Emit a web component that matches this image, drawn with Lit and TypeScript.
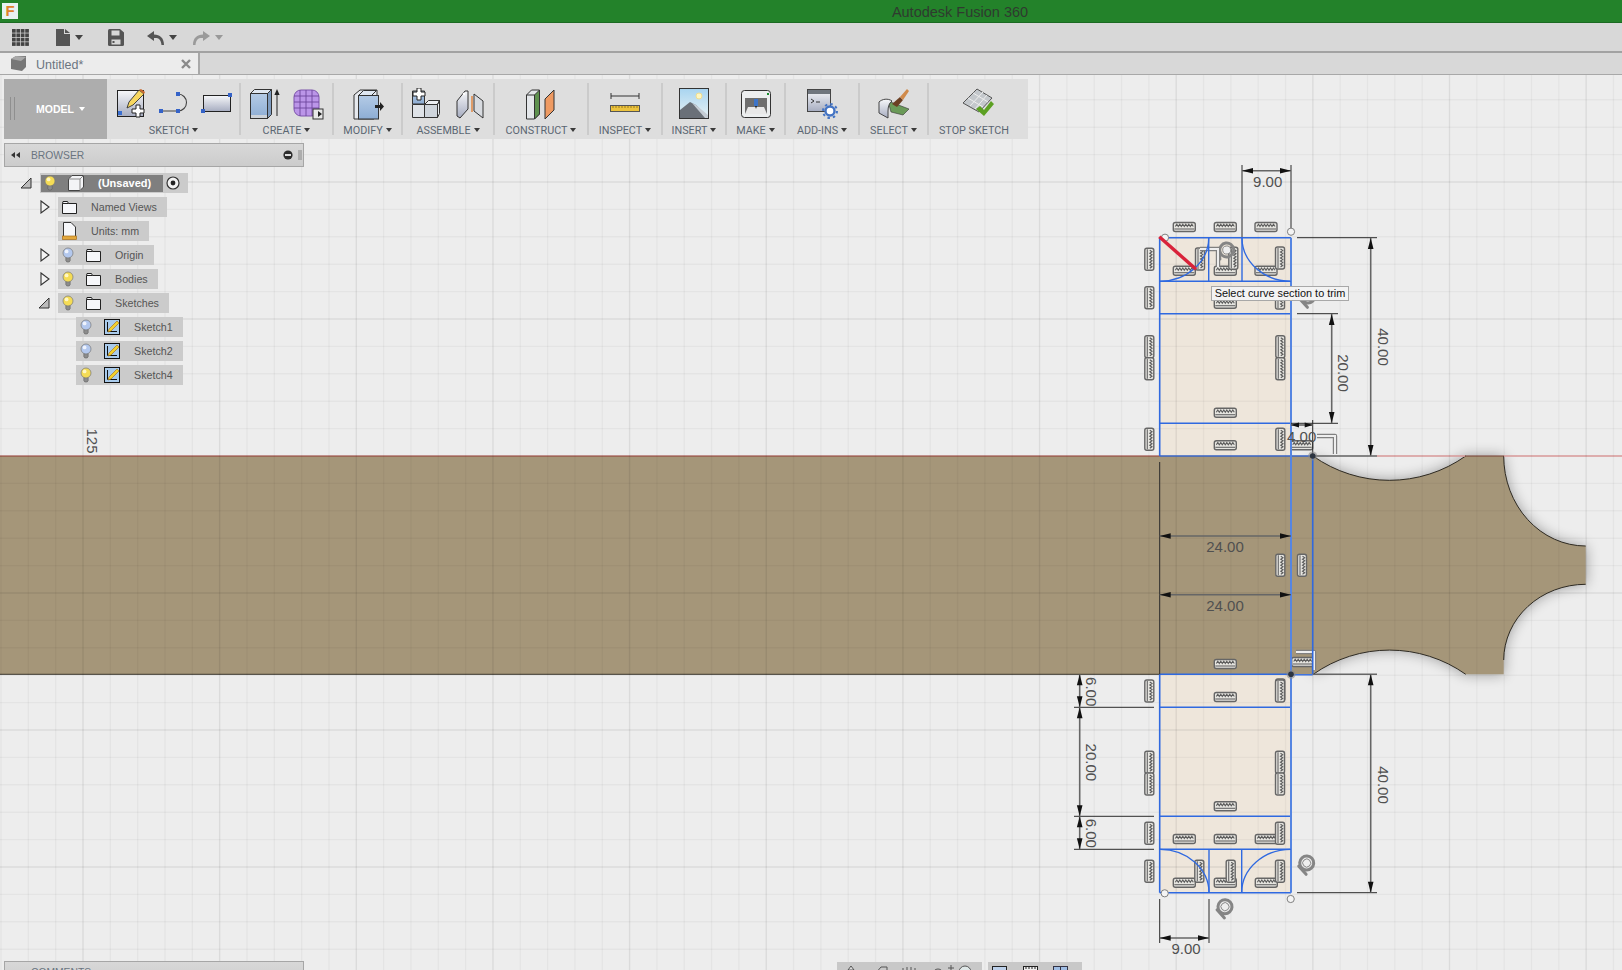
import { LitElement, html, css, svg } from "lit";
import { customElement } from "lit/decorators.js";

const L = 1159.7, R = 1291, R2 = 1312.7, BT = 456, BB = 674.3;

const hIcons: number[][] = [
  [1184.3, 227], [1225.3, 227], [1266, 227], [1184.3, 270.7], [1225.3, 270.7], [1266, 270.7], [1225.3, 303.7],
  [1225.3, 412.7], [1225.3, 445.3], [1301.7, 445.3], [1302.7, 662], [1225.3, 664], [1225.3, 697], [1225.3, 806.3],
  [1184.3, 839], [1225.3, 839], [1266.3, 839], [1184.3, 882.7], [1225.3, 882.7], [1266.3, 882.7],
];
const vIcons: number[][] = [
  [1149.3, 259.3], [1149.3, 297.7], [1280, 258], [1200, 259], [1233.3, 258.3], [1280, 298], [1149.3, 346.7], [1149.3, 368.7],
  [1280.3, 346.7], [1280.3, 368.7], [1149.3, 439.3], [1280.3, 439.3], [1280.3, 565.3], [1302, 565.3], [1280.3, 690],
  [1149.3, 691], [1280, 691], [1149.3, 762.3], [1149.3, 784], [1280, 762.3], [1280, 784], [1149.3, 833.3], [1280, 833.3],
  [1149.3, 871.3], [1280, 871.3], [1199.3, 871.3], [1230.7, 871.3],
];

const arrowR = (x: number, y: number) => svg`<path d="M${x} ${y} l-11 -2.8 v5.6z" fill="#111"/>`;
const arrowL = (x: number, y: number) => svg`<path d="M${x} ${y} l11 -2.8 v5.6z" fill="#111"/>`;
const arrowU = (x: number, y: number) => svg`<path d="M${x} ${y} l-2.8 11 h5.6z" fill="#111"/>`;
const arrowD = (x: number, y: number) => svg`<path d="M${x} ${y} l-2.8 -11 h5.6z" fill="#111"/>`;
const ext = (x1: number, y1: number, x2: number, y2: number) =>
  svg`<line x1=${x1} y1=${y1} x2=${x2} y2=${y2} stroke="#2a2a2a" stroke-width="1"/>`;
const dimLine = (x1: number, y1: number, x2: number, y2: number) =>
  svg`<line x1=${x1} y1=${y1} x2=${x2} y2=${y2} stroke="#666" stroke-width="1.6"/>`;
const vLabel = (x: number, y: number, t: string) =>
  svg`<text class="dim" text-anchor="middle" transform="translate(${x} ${y}) rotate(90)" dy="5">${t}</text>`;
const hLabel = (x: number, y: number, t: string) =>
  svg`<text class="dim" text-anchor="middle" x=${x} y=${y}>${t}</text>`;
const vDim = (x: number, y1: number, y2: number) =>
  svg`${dimLine(x, y1, x, y2)}${arrowU(x, y1)}${arrowD(x, y2)}`;
const hDim = (y: number, x1: number, x2: number) =>
  svg`${dimLine(x1, y, x2, y)}${arrowL(x1, y)}${arrowR(x2, y)}`;
const openPt = (x: number, y: number) =>
  svg`<circle cx=${x} cy=${y} r="3.6" fill="#f4f4f4" stroke="#808080" stroke-width="1"/>`;
const darkPt = (x: number, y: number) =>
  svg`<circle cx=${x} cy=${y} r="4.6" fill="#8a8a8a" opacity=".6"/><circle cx=${x} cy=${y} r="2.8" fill="#2c3440"/>`;

const bulb = (c: string, hi: string) => html`<svg class="ic" width="12" height="16" viewBox="0 0 12 16">
  <path d="M3.8 10.5 h4.4 v3 l-1 1.5 h-2.4 l-1 -1.5z" fill="#8c8c8c" stroke="#555" stroke-width=".5"/>
  <circle cx="6" cy="6" r="5" fill=${c} stroke="#777" stroke-width=".7"/>
  <circle cx="4.6" cy="4.4" r="1.9" fill=${hi}/></svg>`;
const yellow = () => bulb("#f5dc55", "#fff7c4");
const blue = () => bulb("#b3c8ee", "#eef3fd");
const folder = () => html`<svg class="ic" width="15" height="13" viewBox="0 0 15 13">
  <path d="M.5 2.5 v10 h14 v-10 h-8 l-1 -2 h-4.5z" fill="#f6f7fa" stroke="#222" stroke-width="1"/>
  <line x1=".5" y1="2.5" x2="6.5" y2="2.5" stroke="#222"/></svg>`;
const sketchIc = () => html`<svg class="ic" width="16" height="16" viewBox="0 0 16 16">
  <rect x=".5" y=".5" width="15" height="15" fill="#a9cbec" stroke="#111"/>
  <path d="M3.5 3 V12.5 H13" fill="none" stroke="#111" stroke-width="1"/>
  <path d="M5 10 L13 2 l2 2 -8 8 -3 1z" fill="#f3d02c" stroke="#a06a10" stroke-width=".6"/></svg>`;
const caret = () => html`<span class="caret"></span>`;

const icons: Record<string, unknown> = {
  sketchNew: html`<svg width="32" height="32" viewBox="0 0 32 32">
    <rect x="2.5" y="2.5" width="26" height="26" fill="url(#gSteel)" stroke="#222"/>
    <rect x="3" y="23" width="4" height="4" fill="#3a6fd0"/>
    <path d="M12 20 l2 -6 L24 2 l5 4 L18 17z" fill="#f7d760" stroke="#333" stroke-width=".9"/>
    <path d="M24 2 l5 4 1 -2 -4 -3z" fill="#c9682c"/>
    <path d="M21 17 h4 v4 h4 v4 h-4 v4 h-4 v-4 h-4 v-4 h4z" fill="#fff" stroke="#222"/></svg>`,
  line: html`<svg width="32" height="32" viewBox="0 0 32 32">
    <path d="M3 23 H20 A8.5 8.5 0 0 0 20 6" fill="none" stroke="#444" stroke-width="1.1"/>
    <rect x="1" y="21" width="4" height="4" fill="#3563c8"/><rect x="18" y="21" width="4" height="4" fill="#3563c8"/>
    <rect x="18" y="4" width="4" height="4" fill="#3563c8"/></svg>`,
  rect: html`<svg width="32" height="32" viewBox="0 0 32 32">
    <rect x="2.5" y="7.5" width="27" height="16" fill="url(#gSteel)" stroke="#222"/>
    <rect x="27" y="5" width="4" height="4" fill="#3563c8"/><rect x="0" y="21" width="4" height="4" fill="#3563c8"/></svg>`,
  extrude: html`<svg width="32" height="32" viewBox="0 0 32 32">
    <path d="M2.5 5.5 l4 -4 h17 l-4 4z" fill="#dfe7f1" stroke="#333"/>
    <path d="M19.5 5.5 l4 -4 v25 l-4 4z" fill="#7f9cc0" stroke="#333"/>
    <rect x="2.5" y="5.5" width="17" height="25" fill="url(#gBlue)" stroke="#333"/>
    <rect x="3" y="27" width="16" height="3" fill="#cdd3da"/>
    <path d="M29 28 V5" stroke="#222" stroke-width="1"/><path d="M29 1 l-2.6 6 h5.2z" fill="#222"/></svg>`,
  form: html`<svg width="32" height="32" viewBox="0 0 32 32">
    <rect x="1" y="2" width="25" height="26" rx="7" fill="#bb95e8" stroke="#7d55ab"/>
    <path d="M7 2 V28 M13 2 V28 M19 2 V28 M1 8 H26 M1 14 H26 M1 20 H26" stroke="#6d469c" stroke-width=".9"/>
    <rect x="20" y="21" width="10" height="10" fill="#e8e8e8" stroke="#333"/>
    <path d="M22 26 h3 v-3 l4 3 -4 3 v-3z" fill="#222"/></svg>`,
  modify: html`<svg width="32" height="32" viewBox="0 0 32 32">
    <path d="M2 7 l6 -5 h17 v24 l-3 5 h-20z" fill="#e6e9ee" stroke="#333"/>
    <path d="M6.5 7.5 l5 -5 h13 l-5 5z" fill="#dfe7f1" stroke="#333"/>
    <rect x="6.5" y="7.5" width="20" height="23.5" fill="url(#gBlue)" stroke="#333"/>
    <path d="M23 17 h5 v-3 l4 4.5 -4 4.5 v-3 h-5z" fill="#222"/></svg>`,
  asmNew: html`<svg width="32" height="32" viewBox="0 0 32 32">
    <path d="M2.5 3 h12 l0 13 h-12z" fill="url(#gBlue)" stroke="#333"/>
    <path d="M2.5 16.5 h12 v13 h-12z" fill="#dfe3e8" stroke="#333"/>
    <path d="M14.5 16.5 h13 v13 h-13z" fill="#cfd5dc" stroke="#333"/>
    <path d="M14.5 16.5 l4 -4 h11 l-2 4z M27.5 16.5 l2 -4 v13 l-2 4z" fill="#eceff3" stroke="#333"/>
    <path d="M7 0 h4 v4 h4 v4 h-4 v4 h-4 v-4 h-4 v-4 h4z" fill="#fff" stroke="#222"/></svg>`,
  joint: html`<svg width="32" height="32" viewBox="0 0 32 32">
    <path d="M3 28 V13 L11 3 h3 v18 l-8 9z" fill="url(#gSteel)" stroke="#333"/>
    <path d="M20 6 l9 7 v17 l-9 -7z" fill="#d8dbe0" stroke="#333"/>
    <path d="M18 8 V24" stroke="#e0701c" stroke-width="1.2"/><circle cx="10" cy="6" r="1.2" fill="#fff"/></svg>`,
  construct: html`<svg width="32" height="32" viewBox="0 0 32 32">
    <path d="M1.5 7 l5 -5 h8 v24 l-5 5 h-8z" fill="#e4e7ea" stroke="#333"/>
    <path d="M9.5 7 l5 -5 v24 l-5 5z" fill="#5f9250" stroke="#333"/>
    <path d="M1.5 7 h8 v24" fill="none" stroke="#333"/>
    <path d="M20 11 L29 2 v20 l-9 9z" fill="#ee9a62" stroke="#333"/></svg>`,
  inspect: html`<svg width="32" height="32" viewBox="0 0 32 32">
    <path d="M2 5 v6 M2 8 H30 M30 5 v6" fill="none" stroke="#333" stroke-width="1"/>
    <rect x="1.5" y="17.5" width="29" height="6" fill="#ecc33e" stroke="#555"/>
    <path d="M4 18 v2 M7 18 v2 M10 18 v2 M13 18 v2 M16 18 v2 M19 18 v2 M22 18 v2 M25 18 v2 M28 18 v2" stroke="#7a5a10" stroke-width=".7"/></svg>`,
  insert: html`<svg width="32" height="32" viewBox="0 0 32 32">
    <rect x="1.5" y=".5" width="29" height="30" fill="url(#gSky)" stroke="#333"/>
    <circle cx="21" cy="8" r="3" fill="#fff7c0" stroke="#f0dc90"/>
    <path d="M2 30 V22 L12 14 l6 3 12 12 v1z" fill="#6a7078"/>
    <path d="M14 15 l4 2 12 10 v3 h-3z" fill="#c4ccd4"/></svg>`,
  make: html`<svg width="32" height="32" viewBox="0 0 32 32">
    <rect x="1.5" y="2.5" width="29" height="27" rx="3" fill="#eceeef" stroke="#333"/>
    <rect x="27" y="5" width="2" height="2" fill="#148a2a"/>
    <rect x="5" y="10" width="22" height="16" fill="#6e6e6e"/>
    <path d="M8 19 h16 l3 7 h-22z" fill="#e8e8e8"/>
    <rect x="14" y="11" width="4" height="7" fill="#3c74c8"/>
    <path d="M15 18 h2 l-1 3z" fill="#222"/></svg>`,
  addins: html`<svg width="32" height="32" viewBox="0 0 32 32">
    <rect x="1.5" y="1.5" width="23" height="22" fill="url(#gSteel)" stroke="#444"/>
    <rect x="2" y="2" width="22" height="4" fill="#70767e"/>
    <path d="M5 11 l3 2 -3 2 M10 14 h4" fill="none" stroke="#222" stroke-width=".9"/>
    <circle cx="24" cy="23" r="4.5" fill="#fff" stroke="#4474c4" stroke-width="2.4"/>
    <circle cx="24" cy="23" r="7" fill="none" stroke="#4474c4" stroke-width="2" stroke-dasharray="2.5 3"/></svg>`,
  select: html`<svg width="32" height="32" viewBox="0 0 32 32">
    <path d="M10 13 L31 21 l-6 6 -12 -3z" fill="#6a9a58" stroke="#333" stroke-width=".6"/>
    <path d="M1 14 C4 11 10 10 14 13 C11 15 10 19 10 23 V30 L1 25z" fill="url(#gSteel)" stroke="#444"/>
    <path d="M14 16 L22 9 l3 3 -6 7z" fill="#6b3f22"/>
    <path d="M22 9 L29 1 l2 2 -6 9z" fill="#d08a4a"/></svg>`,
  stop: html`<svg width="32" height="32" viewBox="0 0 32 32">
    <path d="M1 15 L15 1 l15 9 -13 14z" fill="#c4c8cc" stroke="#555"/>
    <path d="M6 10 l15 9 M11 5 l15 9 M8 18 L21 4 M13 21 L25 7" stroke="#eee" stroke-width="1"/>
    <path d="M14 21 l4 -3 4 4 7 -9 3 3 -10 12z" fill="#5ca022"/></svg>`,
};

@customElement("app-root")
export class AppRoot extends LitElement {
  static styles = css`
    :host { display: block; width: 1622px; height: 970px; overflow: hidden; background: #ededed;
      font-family: "Liberation Sans", Arial, sans-serif; }
    .app { display: flex; flex-direction: column; height: 970px; }
    .title { height: 23px; flex: none; background: #23822a; border-bottom: 1px solid #1b6a22; position: relative; display: flex;
      align-items: center; justify-content: center; padding: 1px 0 0 298px; box-sizing: border-box;
      color: #2f3a2f; font-size: 14.5px; }
    .logo { position: absolute; left: 2px; top: 3px; width: 16px; height: 16px; background: #e8f2f2;
      color: #e0822a; font: bold 15px/16px "Liberation Sans", sans-serif; text-align: center; }
    .qat { flex: none; background: #d8d8d8; border-bottom: 2px solid #a2a2a2; display: flex;
      align-items: center; padding: 1px 0 0 12px; box-sizing: border-box; height: 30px; }
    .qat svg { display: block; flex: none; }
    .caret { display: inline-block; width: 0; height: 0; border-left: 3.5px solid transparent;
      border-right: 3.5px solid transparent; border-top: 4px solid #444; flex: none; }
    .caret.dim { border-top-color: #999; border-left-width: 4px; border-right-width: 4px; border-top-width: 5px; margin-left: 5px; }
    .qat .caret { border-left-width: 4px; border-right-width: 4px; border-top-width: 5px; margin-left: 5px; }
    .q1 { margin-left: 27px; } .q2 { margin-left: 25px; } .q3 { margin-left: 23px; } .q4 { margin-left: 16px; }
    .tabs { height: 22px; flex: none; background: #d8d8d8; border-bottom: 1px solid #a8a8a8; display: flex; box-sizing: border-box; }
    .tab { height: 21px; background: #ececec; border-right: 2px solid #a8a8a8;
      display: flex; align-items: center; padding: 0 0 0 10px; box-sizing: border-box; width: 200px;
      color: #6b7480; font-size: 12.5px; }
    .tab .name { margin-left: 9px; flex: 1; padding-top: 3px; }
    .tab .x { margin-right: 7px; display: block; }
    .canvas { position: relative; flex: 1; overflow: hidden; }
    .draw { position: absolute; left: 0; top: 0; display: block; }
    .dim { font: 15px "Liberation Sans", Arial, sans-serif; fill: #505050; }
    .toolbar { position: absolute; left: 4px; top: 4px; width: 1024px; height: 60px; background: #dedede; display: flex; }
    .model { width: 103px; background: #adadad; color: #fff; font-size: 10.5px; font-weight: bold; display: flex;
      align-items: center; flex: none; position: relative; justify-content: center; gap: 5px; padding-left: 10px;
      box-sizing: border-box; }
    .model .caret { border-top-color: #fff; }
    .grip { position: absolute; left: 6px; top: 18px; width: 3px; height: 23px; border-left: 1px solid #8f8f8f;
      border-right: 1px solid #8f8f8f; }
    .sec { display: flex; flex-direction: column; align-items: center; flex: none; box-sizing: border-box; position: relative; }
    .sec + .sec::before { content: ""; position: absolute; left: -1px; top: 4px; bottom: 4px; width: 2px; background: #cbcbcb; }
    .icons { display: flex; margin-top: 9px; height: 32px; }
    .icons svg { display: block; }
    .lab { margin-top: 5px; font: 10.8px Roboto, "Liberation Sans", sans-serif; color: #5b6672; display: flex;
      align-items: center; gap: 3px; white-space: nowrap; height: 10px; }
    .lab.plain { padding-right: 8px; }
    .lab .caret { border-top-color: #3a3a3a; }
    .browser { position: absolute; left: 4px; top: 68px; width: 300px; height: 24px; box-sizing: border-box;
      background: linear-gradient(#d8d8d8, #cccccc); border: 1px solid #a6a6a6; display: flex; align-items: center;
      color: #6a7480; font-size: 10.3px; padding-left: 5px; }
    .browser .t { margin-left: 11px; flex: 1; }
    .tree { position: absolute; left: 22px; top: 98px; display: flex; flex-direction: column; gap: 4px;
      font-size: 10.7px; color: #555; }
    .row { display: flex; align-items: center; height: 20px; }
    .l1 { padding-left: 18px; } .l2 { padding-left: 36px; }
    .tw { width: 18px; flex: none; display: flex; } .tw svg { display: block; }
    .tw .dn { margin-left: -2px; }
    .chip { background: #cbcbcb; height: 20px; display: flex; align-items: center; padding-left: 4px; padding-right: 10px; }
    .ic { display: block; flex: none; }
    .gap12 { margin-left: 12px; } .txt15 { margin-left: 14px; } .txt14 { margin-left: 14px; }
    .root { background: #cbcbcb; height: 20px; display: flex; align-items: center; width: 148px; }
    .rootin { background: #7f7f7f; height: 17px; width: 122px; margin-left: 1px; display: flex; align-items: center;
      padding-left: 3px; box-sizing: border-box; color: #fff; font-weight: bold; font-size: 11px; }
    .rootin .cube { margin-left: 12px; } .rootin .n { margin-left: 14px; }
    .radio { margin-left: 3px; display: block; }
    .tip { position: absolute; left: 1211px; top: 211px; height: 15px; width: 138px; box-sizing: border-box;
      background: #f3f3f3; border: 1px solid #a8a8a8; font-size: 10.9px; color: #111; line-height: 13px; text-align: center; white-space: nowrap; }
    .comments { position: absolute; left: 4px; top: 886px; width: 300px; height: 24px; box-sizing: border-box;
      background: linear-gradient(#d8d8d8, #cccccc); border: 1px solid #a6a6a6; color: #6a7480; font-size: 10.3px;
      padding: 5px 0 0 26px; }
    .nav { position: absolute; top: 887px; height: 12px; background: #c8c8c8; display: flex; align-items: flex-start; overflow: hidden; }
    .n1 { left: 837px; width: 145px; } .n2 { left: 988px; width: 94px; }
    .nav svg { display: block; }
    .defs { position: absolute; width: 0; height: 0; }
  `;

  private sec(w: number, label: string, ics: string[], gap: number, car = true) {
    return html`<div class="sec" style="width:${w}px">
      <div class="icons" style="gap:${gap}px">${ics.map((i) => icons[i])}</div>
      <div class="lab ${car ? "" : "plain"}">${label}${car ? caret() : ""}</div>
    </div>`;
  }

  private drawing() {
    const major = (k: number) => k % 5 === 0;
    const xs: unknown[] = [];
    for (let k = -3; k <= 56; k++) {
      const x = 83 + 27.33 * k;
      xs.push(svg`<line x1=${x} x2=${x} y1="74" y2="970" stroke="#000" stroke-opacity=${major(k) ? 0.075 : 0.035} stroke-width="1.4"/>`);
    }
    for (let k = -10; k <= 24; k++) {
      const y = 319 + 27.4 * k;
      xs.push(svg`<line x1="0" x2="1622" y1=${y} y2=${y} stroke="#000" stroke-opacity=${major(k) ? 0.075 : 0.035} stroke-width="1.4"/>`);
    }
    const arcs = `A132 132 0 0 0 1465.7 ${BT} H1503.7 A82 90 0 0 0 1585.7 546 V584.3 A82 76 0 0 0 1503.7 660 V${BB} H1465.7 A132 132 0 0 0 1313.3 ${BB}`;
    const body = `M0 ${BT} H1313 ${arcs} H0 Z`;
    const shade = `M1313 ${BT} ${arcs} Z`;
    const blueC = "#2f69e0";
    const blueL = (x1: number, y1: number, x2: number, y2: number, w = 1.4, c = blueC) =>
      svg`<line x1=${x1} y1=${y1} x2=${x2} y2=${y2} stroke=${c} stroke-width=${w}/>`;
    return svg`
      <defs>
        <filter id="soft" x="-20%" y="-30%" width="140%" height="160%"><feGaussianBlur stdDeviation="7"/></filter>
        <g id="hc"><rect x="-11" y="-4.5" width="22" height="9" rx="2" fill="#e6e5e0" stroke="#666" stroke-width="1.4"/>
          <path d="M-9 -.5 l1.5 -2.2 1.5 2.2 1.5 -2.2 1.5 2.2 1.5 -2.2 1.5 2.2 1.5 -2.2 1.5 2.2 1.5 -2.2 1.5 2.2 1.5 -2.2 1.5 2.2" fill="none" stroke="#5c5c5c" stroke-width="1.1"/>
          <line x1="-10" x2="10" y1="2" y2="2" stroke="#666" stroke-width="1.1"/></g>
        <g id="vc"><use href="#hc" transform="rotate(90)"/></g>
        <g id="tan"><circle r="7" fill="none" stroke="#858585" stroke-width="3"/><circle r="4" fill="#eee" stroke="#777" stroke-width=".8"/>
          <line x1="-8" y1="8" x2="-8" y2="-3" stroke="#858585" stroke-width="3" stroke-linecap="round"/></g>
        <g id="perp"><path d="M0 0 H18 V18" fill="none" stroke="#808080" stroke-width="4.4" stroke-linejoin="round"/>
          <path d="M0 0 H18 V18" fill="none" stroke="#eee" stroke-width="2"/></g>
      </defs>
      <path d=${shade} fill="#000" opacity=".36" filter="url(#soft)"/>
      <rect x=${L} y="238" width=${R - L} height=${BT - 238} fill="#eee6db"/>
      <rect x=${L} y=${BB} width=${R - L} height=${892.7 - BB} fill="#eee6db"/>
      <path d=${body} fill="#a59679"/>
      <path d="M1313 ${BT} A132 132 0 0 0 1465.7 ${BT} M1503.7 ${BT} A82 90 0 0 0 1585.7 546 M1585.7 584.3 A82 76 0 0 0 1503.7 660 M1465.7 ${BB} A132 132 0 0 0 1313.3 ${BB}" fill="none" stroke="#2e2a22" stroke-width="1"/>
      <line x1="0" x2=${L} y1=${BT} y2=${BT} stroke="#a8453c" stroke-width="1"/>
      <line x1="1377" x2="1465" y1=${BT} y2=${BT} stroke="#e9a6a6" stroke-width="1.4"/>
      <line x1="1465" x2="1504" y1=${BT} y2=${BT} stroke="#8a4a3c" stroke-width="1"/>
      <line x1="1504" x2="1622" y1=${BT} y2=${BT} stroke="#e9a6a6" stroke-width="1.4"/>
      <line x1="0" x2=${L} y1=${BB} y2=${BB} stroke="#3a362c" stroke-width="1"/>
      ${xs}
      ${hIcons.map((p) => svg`<use href="#hc" x=${p[0]} y=${p[1]}/>`)}
      ${vIcons.map((p) => svg`<use href="#vc" transform="translate(${p[0]} ${p[1]})"/>`)}
      <use href="#tan" transform="translate(1226.7 250) rotate(-8)"/>
      <use href="#tan" transform="translate(1308 296) rotate(-42)"/>
      <use href="#tan" transform="translate(1306.7 863) rotate(-42)"/>
      <use href="#tan" transform="translate(1225 906.7) rotate(-42)"/>
      <use href="#perp" x="1200" y="249"/>
      <use href="#perp" x="1317" y="436"/>
      <use href="#perp" x="1296" y="652"/>

      ${blueL(L, 237.7, R, 237.7)} ${blueL(L, 281.3, R, 281.3)} ${blueL(L, 313.7, R, 313.7)} ${blueL(L, 423.3, R, 423.3)}
      ${blueL(L, BT, R2, BT, 1.4, "#3a66c8")} ${blueL(L, BB, R, BB, 1.6)}
      ${blueL(L, 707.3, R, 707.3)} ${blueL(L, 816.3, R, 816.3)} ${blueL(L, 849.3, R, 849.3)} ${blueL(L, 892.7, R, 892.7)}
      ${blueL(L, 237.7, L, BT, 1.6)} ${blueL(L, BB, L, 892.7, 1.6)}
      ${blueL(R, 237.7, R, 892.7, 2, "#5585e2")} ${blueL(R2, BT, R2, BB, 1.6)} ${blueL(R, BB + 0.5, R2, BB + 0.5, 1.4)}
      ${blueL(1208.7, 237.7, 1208.7, 281.3)} ${blueL(1242, 237.7, 1242, 281.3)}
      ${blueL(1209, 849.3, 1209, 892.7)} ${blueL(1241.7, 849.3, 1241.7, 892.7)}
      <path d="M${L} 281.3 A49 43.6 0 0 0 1208.7 237.7 M1242 237.7 A49 43.6 0 0 0 ${R} 281.3 M${L} 849.3 A49 43.4 0 0 1 1209 892.7 M1241.7 892.7 A49.3 43.4 0 0 1 ${R} 849.3" fill="none" stroke=${blueC} stroke-width="1.3"/>

      ${ext(1242, 165, 1242, 237)} ${ext(R, 165, R, 232)} ${hDim(170.7, 1242, R)} ${hLabel(1267.7, 187, "9.00")}
      ${ext(1297, 237.7, 1377, 237.7)} ${vDim(1370.7, 238, BT)} ${vLabel(1383, 347, "40.00")}
      ${ext(1297, 313.7, 1338, 313.7)} ${ext(R, 423.3, 1338, 423.3)} ${vDim(1331.7, 314, 423)} ${vLabel(1343, 373, "20.00")}
      ${ext(R2, 420, R2, BT)} ${dimLine(1291, 425, R2, 425)} <path d="M1291 425 l8 -2.6 v5.2z M${R2} 425 l-8 -2.6 v5.2z" fill="#111"/>
      ${hLabel(1301.7, 442, "4.00")}
      ${dimLine(R2, BT, 1377, BT)}
      ${ext(L, 462, L, BB)} ${hDim(536, L, R)} ${hDim(594.7, L, R)} ${hLabel(1225, 552, "24.00")} ${hLabel(1225, 611, "24.00")}
      ${dimLine(R2, BB, 1377, BB)} ${ext(1297, 892.7, 1377, 892.7)} ${vDim(1370.7, BB, 892.7)} ${vLabel(1383, 785, "40.00")}
      ${ext(1074, 707.3, 1154, 707.3)} ${ext(1074, 816.3, 1154, 816.3)} ${ext(1074, 849.3, 1154, 849.3)}
      ${vDim(1079.7, BB, 707.3)} ${vDim(1079.7, 707.3, 816.3)} ${vDim(1079.7, 816.3, 849.3)}
      ${vLabel(1091, 691.7, "6.00")} ${vLabel(1091, 762.3, "20.00")} ${vLabel(1091, 833.3, "6.00")}
      ${ext(L, 899, L, 943)} ${ext(1209, 899, 1209, 943)} ${hDim(938, L, 1209)} ${hLabel(1186, 954, "9.00")}

      <text class="dim" text-anchor="middle" transform="translate(92 441) rotate(90)" dy="5">125</text>
      ${openPt(1165, 237.7)} ${openPt(1291, 231.7)} ${openPt(1164.7, 893.3)} ${openPt(1290.7, 899)}
      ${darkPt(R2, BT)} ${darkPt(R, BB)}
      <line x1="1159.3" y1="236.7" x2="1196" y2="269.3" stroke="#d9233a" stroke-width="3.4"/>
    `;
  }

  render() {
    return html`
      <svg class="defs" width="0" height="0"><defs>
        <linearGradient id="gSteel" x1="0" y1="0" x2="0" y2="1"><stop offset="0" stop-color="#f7f8fa"/><stop offset="1" stop-color="#a6acc0"/></linearGradient>
        <linearGradient id="gBlue" x1="0" y1="0" x2="0" y2="1"><stop offset="0" stop-color="#b4cbe6"/><stop offset="1" stop-color="#8dadd4"/></linearGradient>
        <linearGradient id="gSky" x1="0" y1="0" x2="0" y2="1"><stop offset="0" stop-color="#a8d4f0"/><stop offset="1" stop-color="#e8f2f4"/></linearGradient>
      </defs></svg>
      <div class="app">
        <div class="title"><span class="logo">F</span>Autodesk Fusion 360</div>
        <div class="qat">
          <svg width="17" height="17" viewBox="0 0 17 17" fill="#444">
            ${[0, 1, 2, 3].map((r) => [0, 1, 2, 3].map((c) => svg`<rect x=${c * 4.4} y=${r * 4.4} width="3.7" height="3.7"/>`))}
          </svg>
          <svg class="q1" width="14" height="17" viewBox="0 0 14 17"><path d="M0 0 H8 V5 H14 V17 H0z M9 0 L14 4 H9z" fill="#555"/></svg>${caret()}
          <svg class="q2" width="16" height="17" viewBox="0 0 16 17"><path d="M1.5 0 H12 L16 3.5 V15.5 Q16 17 14.5 17 H1.5 Q0 17 0 15.5 V1.5 Q0 0 1.5 0z" fill="#555"/><rect x="3.5" y="1.5" width="8" height="5" fill="#d8d8d8"/><rect x="3.5" y="10.5" width="9" height="5" fill="#d8d8d8"/><rect x="4.5" y="12" width="2" height="2" fill="#555"/></svg>
          <svg class="q3" width="17" height="14" viewBox="0 0 17 14"><path d="M7 0 L0 5 L7 10 V7 C11 6.5 14 8 14.5 14 H17 C17 7 13 3.5 7 3.5z" fill="#555"/></svg>${caret()}
          <svg class="q4" width="17" height="14" viewBox="0 0 17 14"><path d="M10 0 L17 5 L10 10 V7 C6 6.5 3 8 2.5 14 H0 C0 7 4 3.5 10 3.5z" fill="#9a9a9a"/></svg><span class="caret dim"></span>
        </div>
        <div class="tabs">
          <div class="tab">
            <svg width="17" height="16" viewBox="0 0 17 16"><path d="M1 3 L6 0 H16 V11 L12 15 L1 13z" fill="#777"/><path d="M1 3 L11 5 L16 1 L6 0z" fill="#a8a8a8"/></svg>
            <span class="name">Untitled*</span>
            <svg class="x" width="10" height="10" viewBox="0 0 10 10"><path d="M1 1 L9 9 M9 1 L1 9" stroke="#8a8a8a" stroke-width="2.4"/></svg>
          </div>
        </div>
        <div class="canvas">
          <svg class="draw" width="1622" height="895" viewBox="0 75 1622 895">${this.drawing()}</svg>
          <div class="toolbar">
            <div class="model"><span class="grip"></span>MODEL${caret()}</div>
            ${this.sec(133, "SKETCH", ["sketchNew", "line", "rect"], 11)}
            ${this.sec(93, "CREATE", ["extrude", "form"], 13)}
            ${this.sec(69, "MODIFY", ["modify"], 0)}
            ${this.sec(92, "ASSEMBLE", ["asmNew", "joint"], 12)}
            ${this.sec(94, "CONSTRUCT", ["construct"], 0)}
            ${this.sec(74, "INSPECT", ["inspect"], 0)}
            ${this.sec(64, "INSERT", ["insert"], 0)}
            ${this.sec(59, "MAKE", ["make"], 0)}
            ${this.sec(74, "ADD-INS", ["addins"], 0)}
            ${this.sec(69, "SELECT", ["select"], 0)}
            ${this.sec(100, "STOP SKETCH", ["stop"], 0, false)}
          </div>
          <div class="browser">
            <svg width="10" height="8" viewBox="0 0 10 8"><path d="M5 1 V7 L1 4z M10 1 V7 L6 4z" fill="#333"/></svg>
            <span class="t">BROWSER</span>
            <svg width="10" height="10" viewBox="0 0 10 10"><circle cx="5" cy="5" r="4.6" fill="#2c2c2c"/><rect x="2" y="4" width="6" height="2" fill="#ddd"/></svg>
            <svg width="10" height="12" viewBox="0 0 10 12"><path d="M6 1 V11" stroke="#888"/><path d="M8 1 V11" stroke="#888"/></svg>
          </div>
          <div class="tree">
            <div class="row">
              <span class="tw">${this.down()}</span>
              <div class="root"><div class="rootin">${yellow()}
                <svg class="ic cube" width="16" height="16" viewBox="0 0 16 16"><path d="M.5 4 L4 .5 H15.5 V12 L12 15.5 H.5z" fill="#f3f4f6" stroke="#444"/><path d="M.5 4 H12 V15.5 M12 4 L15.5 .5" fill="none" stroke="#888"/></svg>
                <span class="n">(Unsaved)</span></div>
                <svg class="radio" width="14" height="14" viewBox="0 0 14 14"><circle cx="7" cy="7" r="6" fill="#f2f2f2" stroke="#333" stroke-width="1.2"/><circle cx="7" cy="7" r="2.4" fill="#222"/></svg>
              </div>
            </div>
            <div class="row l1"><span class="tw">${this.right()}</span><div class="chip">${folder()}<span class="txt15">Named Views</span></div></div>
            <div class="row l1"><span class="tw"></span><div class="chip">
              <svg class="ic" width="15" height="18" viewBox="0 0 15 18"><path d="M1.5 .5 H9 L13.5 5 V14.5 H1.5z" fill="#f6f7fa" stroke="#333"/><rect x=".5" y="14" width="14" height="3.5" fill="#e3a83c" stroke="#a8701a" stroke-width=".7"/></svg>
              <span class="txt15">Units: mm</span></div></div>
            ${this.folderRow("Origin", blue())}
            ${this.folderRow("Bodies", yellow())}
            ${this.folderRow("Sketches", yellow(), true)}
            ${this.skRow("Sketch1", blue())}
            ${this.skRow("Sketch2", blue())}
            ${this.skRow("Sketch4", yellow())}
          </div>
          <div class="tip">Select curve section to trim</div>
          <div class="comments">COMMENTS</div>
          <div class="nav n1"><svg width="145" height="12" viewBox="0 0 145 12" fill="none" stroke="#555">
            <path d="M11 8 l3 -4 3 4z" fill="#ddd"/><path d="M38 12 l6 -7 h6 v7" /><path d="M66 12 v-6 M70 12 v-7 M74 12 v-7 M78 12 v-6"/>
            <circle cx="101" cy="12" r="5"/><path d="M111 6 h6 M114 3 v6"/><circle cx="128" cy="10" r="6" fill="#dfe8e8"/></svg></div>
          <div class="nav n2"><svg width="94" height="12" viewBox="0 0 94 12" fill="none">
            <rect x="4.5" y="4.5" width="14" height="10" fill="#bcd0ea" stroke="#222"/><rect x="35.5" y="4.5" width="14" height="10" fill="#eee" stroke="#222"/>
            <path d="M38 4 v3 M41 4 v3 M44 4 v3 M47 4 v3" stroke="#222"/><rect x="65.5" y="4.5" width="14" height="10" fill="#9fbde4" stroke="#334"/><path d="M72.5 4 v9" stroke="#334"/></svg></div>
        </div>
      </div>`;
  }

  private right() {
    return html`<svg width="10" height="14" viewBox="0 0 10 14"><path d="M1 1 L9 7 L1 13z" fill="#f4f4f4" stroke="#333" stroke-width="1.1"/></svg>`;
  }
  private down() {
    return html`<svg class="dn" width="12" height="12" viewBox="0 0 12 12"><path d="M1 11 L11 1 V11z" fill="#bbb" stroke="#333" stroke-width="1"/></svg>`;
  }
  private folderRow(t: string, b: unknown, open = false) {
    return html`<div class="row l1"><span class="tw">${open ? this.down() : this.right()}</span>
      <div class="chip">${b}<span class="gap12">${folder()}</span><span class="txt15">${t}</span></div></div>`;
  }
  private skRow(t: string, b: unknown) {
    return html`<div class="row l2"><span class="tw"></span>
      <div class="chip">${b}<span class="gap12">${sketchIc()}</span><span class="txt14">${t}</span></div></div>`;
  }
}
